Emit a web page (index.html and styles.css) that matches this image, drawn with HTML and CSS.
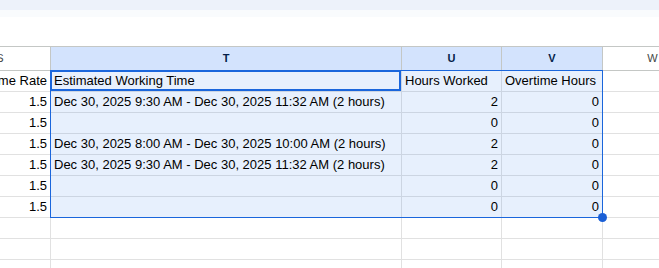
FILE: index.html
```html
<!DOCTYPE html>
<html>
<head>
<meta charset="utf-8">
<link rel="stylesheet" href="styles.css">
</head>
<body>
<div class="toolbar"></div>
<div class="subbar"></div>
<div class="gap"></div>
<div class="sheet">
  <div class="grid">
    <div class="hdr">S</div>
    <div class="hdr on">T</div>
    <div class="hdr on">U</div>
    <div class="hdr on">V</div>
    <div class="hdr">W</div>

    <div class="c num lbl">Overtime Rate</div>
    <div class="c s">Estimated Working Time</div>
    <div class="c s">Hours Worked</div>
    <div class="c s">Overtime Hours</div>
    <div class="c"></div>

    <div class="c num">1.5</div>
    <div class="c s">Dec 30, 2025 9:30 AM - Dec 30, 2025 11:32 AM (2 hours)</div>
    <div class="c s num">2</div>
    <div class="c s num">0</div>
    <div class="c"></div>

    <div class="c num">1.5</div>
    <div class="c s"></div>
    <div class="c s num">0</div>
    <div class="c s num">0</div>
    <div class="c"></div>

    <div class="c num">1.5</div>
    <div class="c s">Dec 30, 2025 8:00 AM - Dec 30, 2025 10:00 AM (2 hours)</div>
    <div class="c s num">2</div>
    <div class="c s num">0</div>
    <div class="c"></div>

    <div class="c num">1.5</div>
    <div class="c s">Dec 30, 2025 9:30 AM - Dec 30, 2025 11:32 AM (2 hours)</div>
    <div class="c s num">2</div>
    <div class="c s num">0</div>
    <div class="c"></div>

    <div class="c num">1.5</div>
    <div class="c s"></div>
    <div class="c s num">0</div>
    <div class="c s num">0</div>
    <div class="c"></div>

    <div class="c num">1.5</div>
    <div class="c s"></div>
    <div class="c s num">0</div>
    <div class="c s num">0</div>
    <div class="c"></div>

    <div class="c"></div><div class="c"></div><div class="c"></div><div class="c"></div><div class="c"></div>
    <div class="c"></div><div class="c"></div><div class="c"></div><div class="c"></div><div class="c"></div>
    <div class="c"></div><div class="c"></div><div class="c"></div><div class="c"></div><div class="c"></div>
  </div>
  <div class="selection"></div>
  <div class="active"></div>
  <div class="handle"></div>
</div>
</body>
</html>
```

FILE: styles.css
```css
html, body {
  margin: 0;
  padding: 0;
  background: #ffffff;
  overflow: hidden;
  width: 659px;
  height: 268px;
}

.toolbar {
  height: 10px;
  background: #edf2fa;
}

.subbar {
  height: 7px;
  background: #f9fbfd;
}

.gap {
  height: 29px;
  background: #ffffff;
}

.sheet {
  position: relative;
  margin-left: -50px;
  border-top: 1px solid #c4c7c5;
  font-family: "Liberation Sans", Arial, sans-serif;
  font-size: 13px;
  color: #000000;
}

.grid {
  display: grid;
  grid-template-columns: 101px 351px 100px 101px 100px;
  grid-template-rows: 24px;
  grid-auto-rows: 21px;
}

.grid > div {
  box-sizing: border-box;
  border-right: 1px solid #e1e1e1;
  border-bottom: 1px solid #e1e1e1;
  white-space: nowrap;
  overflow: hidden;
}

.hdr {
  line-height: 23px;
  text-align: center;
  font-size: 11px;
  color: #444746;
  background: #ffffff;
  border-color: #c4c7c5 !important;
}

.hdr.on {
  background: #d3e3fd;
  color: #041e49;
  font-weight: bold;
}

.c {
  line-height: 20px;
  padding: 0 3px;
}

.c.num {
  text-align: right;
}

.c.lbl {
  padding-right: 3px;
  direction: rtl;
}

.c.s {
  background: #e7f0fd;
  border-color: #ccd5e2 !important;
}

.selection {
  position: absolute;
  left: 100px;
  top: 23px;
  width: 553px;
  height: 148px;
  box-sizing: border-box;
  border: 1px solid #1a66dc;
  pointer-events: none;
}

.active {
  position: absolute;
  left: 100px;
  top: 23px;
  width: 351px;
  height: 21px;
  box-sizing: border-box;
  border: 2px solid #1a66dc;
  pointer-events: none;
}

.handle {
  position: absolute;
  left: 648px;
  top: 166px;
  width: 9px;
  height: 9px;
  border-radius: 50%;
  background: #1a5fd6;
}
```
